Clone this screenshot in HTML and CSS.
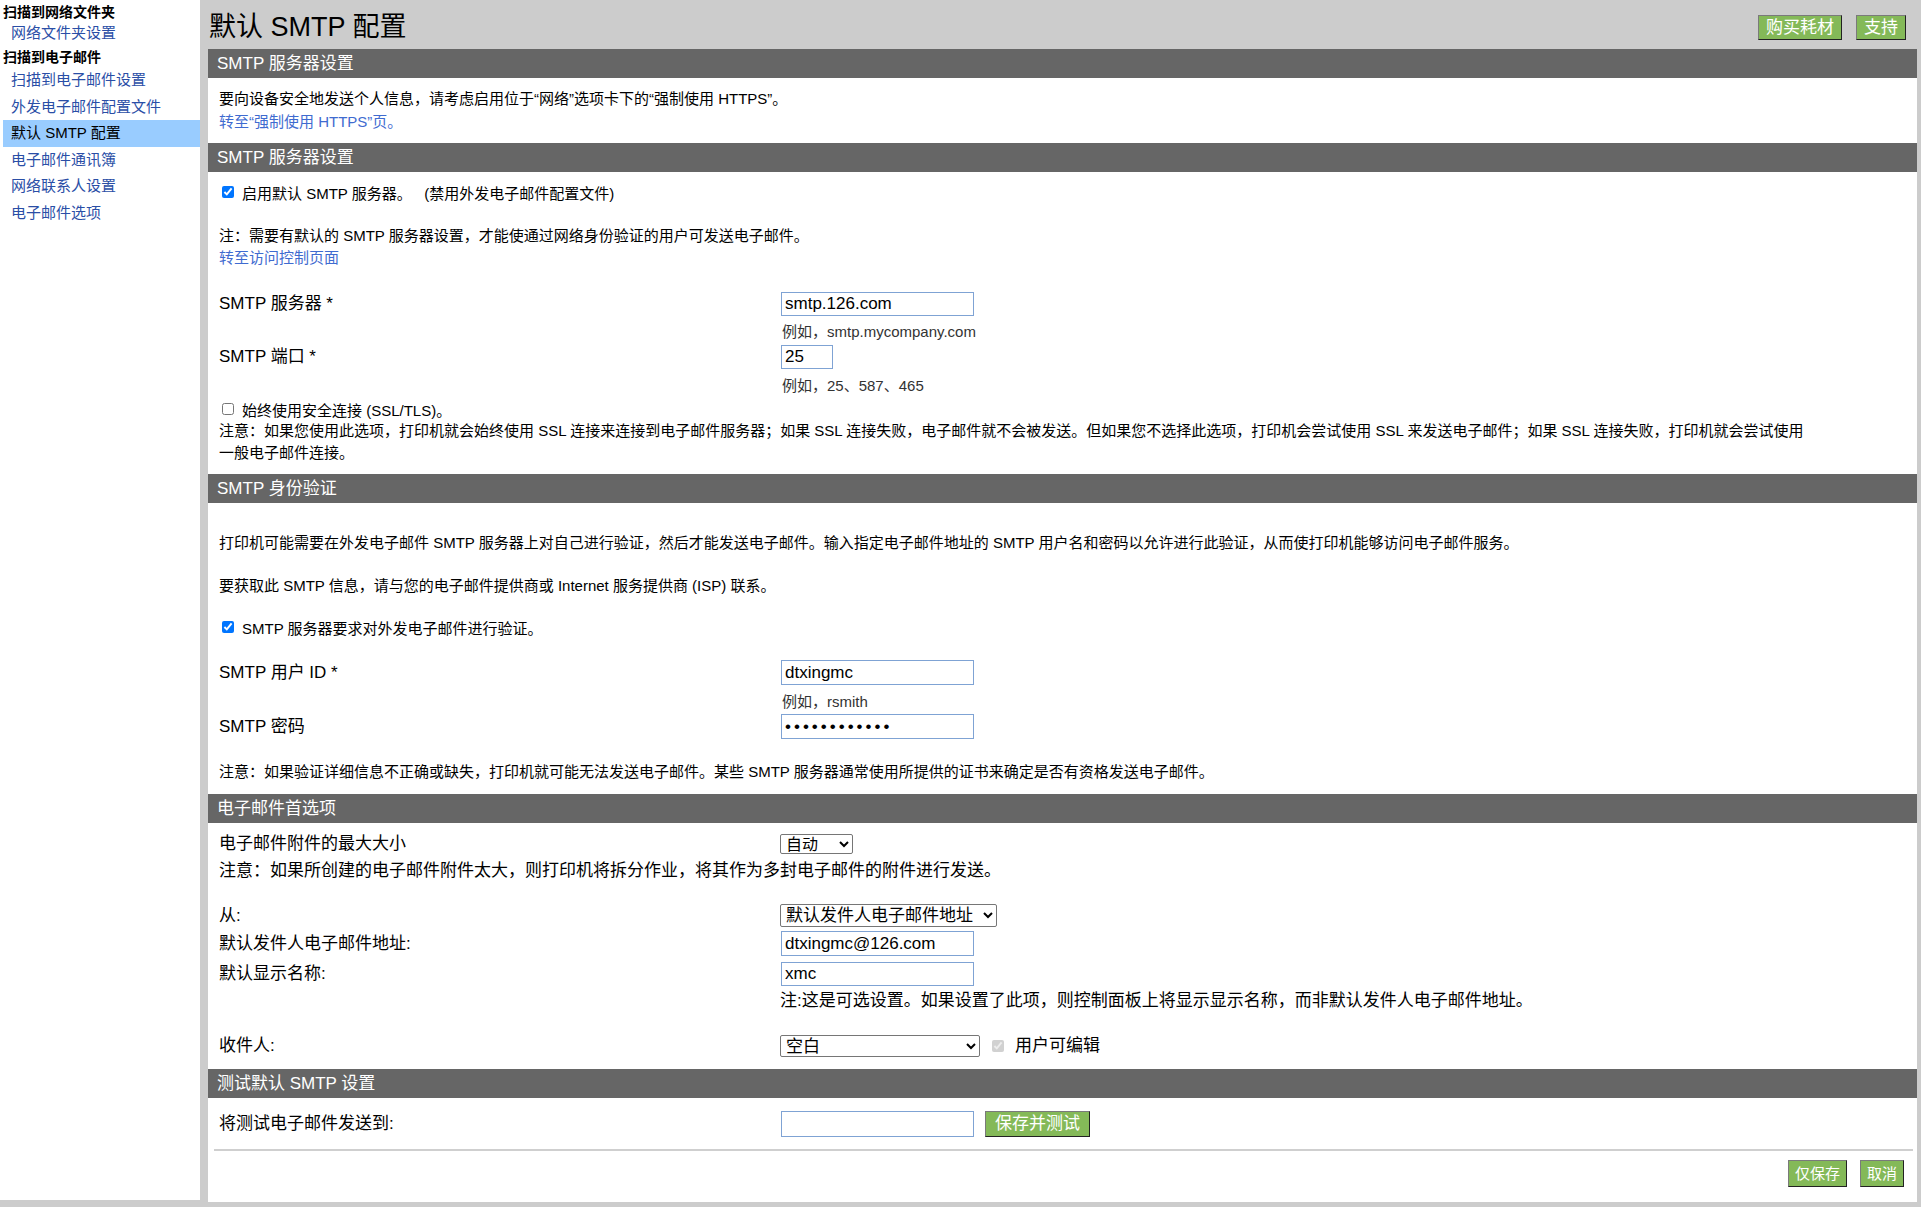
FILE: index.html
```html
<!DOCTYPE html>
<html lang="zh-CN">
<head>
<meta charset="utf-8">
<title>默认 SMTP 配置</title>
<link rel="stylesheet" href="styles.css">
</head>
<body>
<div class="page">
  <aside class="sidebar">
    <div class="nav-h">扫描到网络文件夹</div>
    <a class="nav-a first" href="#">网络文件夹设置</a>
    <div class="nav-h second">扫描到电子邮件</div>
    <a class="nav-a" href="#">扫描到电子邮件设置</a>
    <a class="nav-a" href="#">外发电子邮件配置文件</a>
    <a class="nav-a active" href="#">默认 SMTP 配置</a>
    <a class="nav-a" href="#">电子邮件通讯簿</a>
    <a class="nav-a" href="#">网络联系人设置</a>
    <a class="nav-a" href="#">电子邮件选项</a>
  </aside>

  <main class="main">
    <div class="titlebar">
      <h1 class="title">默认 SMTP 配置</h1>
      <div class="top-actions">
        <button class="btn btn-top">购买耗材</button>
        <button class="btn btn-top">支持</button>
      </div>
    </div>

    <div class="panel">
      <h2 class="bar">SMTP 服务器设置</h2>
      <div class="sec sec1">
        <p class="line">要向设备安全地发送个人信息，请考虑启用位于“网络”选项卡下的“强制使用 HTTPS”。</p>
        <p class="line"><a class="link" href="#">转至“强制使用 HTTPS”页。</a></p>
      </div>

      <h2 class="bar">SMTP 服务器设置</h2>
      <div class="sec sec2">
        <label class="cb-row r-enable"><input type="checkbox" checked>启用默认 SMTP 服务器。&nbsp;&nbsp; (禁用外发电子邮件配置文件)</label>
        <p class="line r-note1">注：需要有默认的 SMTP 服务器设置，才能使通过网络身份验证的用户可发送电子邮件。</p>
        <p class="line"><a class="link" href="#">转至访问控制页面</a></p>

        <div class="frow r-server">
          <span class="flabel h24">SMTP 服务器 *</span>
          <div class="fcell"><input class="txt w193 h24" type="text" value="smtp.126.com"></div>
        </div>
        <div class="frow r-hint1"><span></span><span class="hint">例如，smtp.mycompany.com</span></div>

        <div class="frow r-port">
          <span class="flabel h24">SMTP 端口 *</span>
          <div class="fcell"><input class="txt w52 h24" type="text" value="25"></div>
        </div>
        <div class="frow r-hint2"><span></span><span class="hint">例如，25、587、465</span></div>

        <label class="cb-row r-ssl"><input type="checkbox">始终使用安全连接 (SSL/TLS)。</label>
        <p class="note-wide">注意：如果您使用此选项，打印机就会始终使用 SSL 连接来连接到电子邮件服务器；如果 SSL 连接失败，电子邮件就不会被发送。但如果您不选择此选项，打印机会尝试使用 SSL 来发送电子邮件；如果 SSL 连接失败，打印机就会尝试使用一般电子邮件连接。</p>
      </div>

      <h2 class="bar">SMTP 身份验证</h2>
      <div class="sec sec3">
        <p class="line r-p1">打印机可能需要在外发电子邮件 SMTP 服务器上对自己进行验证，然后才能发送电子邮件。输入指定电子邮件地址的 SMTP 用户名和密码以允许进行此验证，从而使打印机能够访问电子邮件服务。</p>
        <p class="line r-p2">要获取此 SMTP 信息，请与您的电子邮件提供商或 Internet 服务提供商 (ISP) 联系。</p>
        <label class="cb-row r-auth"><input type="checkbox" checked>SMTP 服务器要求对外发电子邮件进行验证。</label>

        <div class="frow r-user">
          <span class="flabel h25">SMTP 用户 ID *</span>
          <div class="fcell"><input class="txt w193 h25" type="text" value="dtxingmc"></div>
        </div>
        <div class="frow r-hint3"><span></span><span class="hint">例如，rsmith</span></div>
        <div class="frow r-pass">
          <span class="flabel h25">SMTP 密码</span>
          <div class="fcell"><input class="txt w193 h25 pw" type="password" value="abcdefghijkl"></div>
        </div>
        <p class="line r-note3">注意：如果验证详细信息不正确或缺失，打印机就可能无法发送电子邮件。某些 SMTP 服务器通常使用所提供的证书来确定是否有资格发送电子邮件。</p>
      </div>

      <h2 class="bar">电子邮件首选项</h2>
      <div class="sec sec4">
        <div class="frow r-size">
          <span class="flabel big h20">电子邮件附件的最大大小</span>
          <div class="fcell">
            <select class="sel w73 h20"><option>自动</option></select>
          </div>
        </div>
        <p class="big-line r-note4">注意：如果所创建的电子邮件附件太大，则打印机将拆分作业，将其作为多封电子邮件的附件进行发送。</p>

        <div class="frow r-from">
          <span class="flabel big h23">从:</span>
          <div class="fcell"><select class="sel w217 h23"><option>默认发件人电子邮件地址</option></select></div>
        </div>
        <div class="frow r-addr">
          <span class="flabel big h25">默认发件人电子邮件地址:</span>
          <div class="fcell"><input class="txt w193 h25" type="text" value="dtxingmc@126.com"></div>
        </div>
        <div class="frow r-name">
          <span class="flabel big h24">默认显示名称:</span>
          <div class="fcell"><input class="txt w193 h24" type="text" value="xmc"></div>
        </div>
        <div class="frow r-note5"><span></span><span class="big-note">注:这是可选设置。如果设置了此项，则控制面板上将显示显示名称，而非默认发件人电子邮件地址。</span></div>

        <div class="frow r-to">
          <span class="flabel big h22">收件人:</span>
          <div class="fcell">
            <select class="sel w200 h22"><option>空白</option></select>
            <input class="cb-dis" type="checkbox" checked disabled>
            <span class="big-text">用户可编辑</span>
          </div>
        </div>
      </div>

      <h2 class="bar">测试默认 SMTP 设置</h2>
      <div class="sec sec5">
        <div class="frow r-test">
          <span class="flabel big h26">将测试电子邮件发送到:</span>
          <div class="fcell">
            <input class="txt w193 h26" type="text" value="">
            <button class="btn btn-test">保存并测试</button>
          </div>
        </div>
        <div class="rule"></div>
        <div class="bottom-actions">
          <button class="btn btn-bottom">仅保存</button>
          <button class="btn btn-bottom">取消</button>
        </div>
      </div>
    </div>
  </main>
</div>
</body>
</html>
```

FILE: styles.css
```css
html, body {
  margin: 0;
  padding: 0;
}
body {
  background: #cccccc;
  font-family: "Liberation Sans", "Noto Sans CJK SC", sans-serif;
  color: #000;
  width: 1921px;
  height: 1207px;
  overflow: hidden;
}
p { margin: 0; }

.page {
  display: flex;
  align-items: flex-start;
  gap: 8px;
}

/* ---------- sidebar ---------- */
.sidebar {
  width: 200px;
  height: 1198px;
  background: #fff;
  padding-top: 2px;
  box-sizing: content-box;
  display: flex;
  flex-direction: column;
}
.nav-h {
  font-size: 14px;
  font-weight: bold;
  line-height: 20px;
  height: 20px;
  padding-left: 3px;
  white-space: nowrap;
}
.nav-h.second { margin-top: 3px; }
.nav-a {
  display: block;
  margin-left: 3px;
  padding-left: 8px;
  height: 26.5px;
  line-height: 26.5px;
  font-size: 15px;
  color: #2a4ea6;
  text-decoration: none;
  white-space: nowrap;
}
.nav-a.first {
  height: 22px;
  line-height: 22px;
}
.nav-a.active {
  background: #99ccff;
  color: #000;
}

/* ---------- main ---------- */
.main {
  width: 1709px;
  display: flex;
  flex-direction: column;
}
.titlebar {
  height: 49px;
  display: flex;
  justify-content: space-between;
  align-items: flex-start;
}
.title {
  margin: 0;
  padding: 6px 0 0 1px;
  font-size: 27px;
  line-height: 43px;
  font-weight: normal;
  white-space: nowrap;
}
.top-actions {
  display: flex;
  gap: 14px;
  margin-top: 15px;
  padding-right: 11px;
}

.btn {
  font-family: "Liberation Sans", "Noto Sans CJK SC", sans-serif;
  background: #84b958;
  color: #fff;
  border: 1px solid;
  border-color: #7a7a7a #222 #222 #7a7a7a;
  margin: 0;
  cursor: pointer;
  white-space: nowrap;
}
.btn-top {
  font-size: 17px;
  height: 25px;
  line-height: 23px;
  padding: 0 7px;
}
.btn-test {
  font-size: 17px;
  height: 26px;
  line-height: 24px;
  padding: 0 9px;
  margin-left: 11px;
}
.btn-bottom {
  font-size: 15px;
  height: 27px;
  line-height: 25px;
  padding: 0 6px;
}

.panel {
  background: #fff;
  height: 1153px;
}
.bar {
  margin: 0;
  height: 29px;
  line-height: 29px;
  background: #666666;
  color: #fff;
  font-size: 17px;
  font-weight: normal;
  padding-left: 9px;
  white-space: nowrap;
}

.sec {
  padding: 0 11px;
  display: flex;
  flex-direction: column;
  align-items: flex-start;
}
.line {
  font-size: 15px;
  line-height: 22px;
  white-space: nowrap;
}
.big-line {
  font-size: 17px;
  line-height: 22px;
  white-space: nowrap;
}
.link {
  color: #3f6bd0;
  text-decoration: none;
}

/* section 1 */
.sec1 { padding-top: 10px; padding-bottom: 10px; }
.sec1 .line { line-height: 22.5px; }

/* checkbox rows */
.cb-row {
  display: flex;
  align-items: center;
  font-size: 15px;
  white-space: pre;
}
.cb-row input {
  width: 12px;
  height: 12px;
  margin: 0 8px 0 3px;
}

/* form rows */
.frow {
  display: grid;
  grid-template-columns: 561px auto;
  align-items: center;
  width: 100%;
}
.flabel {
  font-size: 17px;
  white-space: nowrap;
}
.flabel.h20 { line-height: 20px; }
.flabel.h22 { line-height: 22px; }
.flabel.h23 { line-height: 23px; }
.flabel.h24 { line-height: 24px; }
.flabel.h25 { line-height: 25px; }
.flabel.h26 { line-height: 26px; }
.fcell {
  display: flex;
  align-items: center;
}
.hint {
  font-size: 15px;
  line-height: 20px;
  color: #333;
  white-space: nowrap;
  padding-left: 2px;
}
.big-note {
  font-size: 17px;
  line-height: 20px;
  white-space: nowrap;
}
.big-text {
  font-size: 17px;
  line-height: 22px;
  white-space: nowrap;
}

.txt {
  box-sizing: border-box;
  font-family: "Liberation Sans", "Noto Sans CJK SC", sans-serif;
  font-size: 17px;
  border: 1px solid #7fa3d4;
  padding: 0 3px;
  margin: 0 0 0 1px;
  background: #fff;
  color: #000;
  outline: none;
}
.txt.pw { letter-spacing: 3px; }
.w193 { width: 193px; }
.w52 { width: 52px; }
.h24 { height: 24px; }
.h25 { height: 25px; }
.h26 { height: 26px; }

.sel {
  box-sizing: border-box;
  font-family: "Liberation Sans", "Noto Sans CJK SC", sans-serif;
  font-size: 17px;
  border: 1px solid #767676;
  border-radius: 2px;
  padding: 0 1px;
  margin: 0;
  background: #fff;
  color: #000;
}
.w73 { width: 73px; }
.w217 { width: 217px; }
.w200 { width: 200px; }
.sel.h20 { height: 20px; font-size: 16px; }
.sel.h22 { height: 22px; }
.sel.h23 { height: 23px; }

.cb-dis {
  width: 12px;
  height: 12px;
  margin: 0 11px 0 12px;
}

/* section 2 offsets */
.sec2 { padding-bottom: 11px; }
.r-enable { margin-top: 8px; height: 24px; }
.r-note1 { margin-top: 21px; }
.r-server { margin-top: 23px; }
.r-hint1 { margin-top: 6px; }
.r-port { margin-top: 3px; }
.r-hint2 { margin-top: 7px; }
.r-ssl { margin-top: 2px; height: 22px; }
.note-wide {
  font-size: 15px;
  line-height: 21.5px;
  width: 1590px;
}

/* section 3 offsets */
.sec3 { padding-bottom: 11px; }
.r-p1 { margin-top: 29px; }
.r-p2 { margin-top: 21px; }
.r-auth { margin-top: 19px; height: 22px; }
.r-user { margin-top: 22px; }
.r-hint3 { margin-top: 7px; }
.r-pass { margin-top: 2px; }
.r-note3 { margin-top: 22px; }

/* section 4 offsets */
.sec4 { padding-bottom: 12px; }
.r-size { margin-top: 11px; }
.r-note4 { margin-top: 6px; }
.r-from { margin-top: 22px; }
.r-addr { margin-top: 4px; }
.r-name { margin-top: 6px; }
.r-note5 { margin-top: 5px; }
.r-to { margin-top: 24px; }

/* section 5 */
.sec5 {
  padding: 0;
}
.r-test {
  margin-top: 13px;
  padding-left: 11px;
  box-sizing: border-box;
}
.rule {
  align-self: stretch;
  margin: 12px 4px 0 6px;
  height: 2px;
  background: #cfcfcf;
}
.bottom-actions {
  align-self: stretch;
  display: flex;
  justify-content: flex-end;
  gap: 13px;
  margin-top: 9px;
  padding-right: 13px;
}
```
